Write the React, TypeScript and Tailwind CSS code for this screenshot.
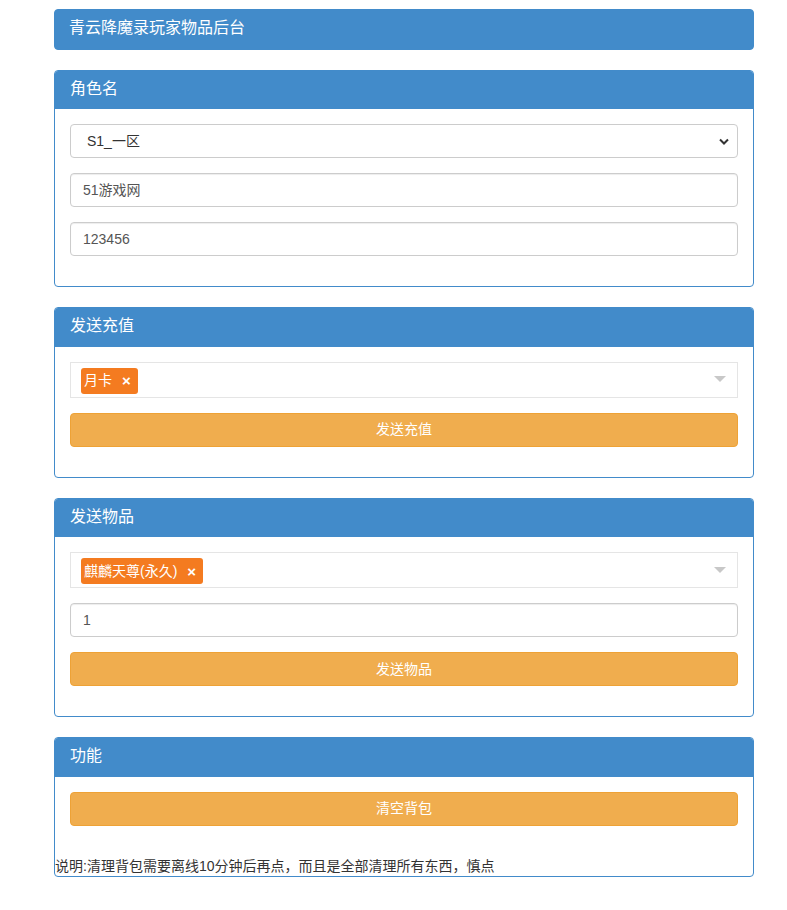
import React from "react";

const font = { fontFamily: '"Liberation Sans", "Noto Sans CJK SC", sans-serif' };

function Panel({ title, children, footer }: { title: string; children?: React.ReactNode; footer?: React.ReactNode }) {
  return (
    <div className="mb-[20px] rounded-[4px] border border-[#428bca] bg-white">
      <div className="h-[38.6px] rounded-t-[3px] border-b border-[#428bca] bg-[#428bca] px-[15px] pt-[9px] text-[16px] leading-[18px] text-white">
        {title}
      </div>
      {children !== undefined && <div className="flex flex-col gap-[15px] p-[15px] pb-[30px]">{children}</div>}
      {footer}
    </div>
  );
}

function TextBox({ value }: { value: string }) {
  return (
    <div className="flex h-[34px] items-center rounded-[4px] border border-[#ccc] px-[12px] text-[14px] text-[#555] shadow-[inset_0_1px_1px_rgba(0,0,0,0.075)]">
      {value}
    </div>
  );
}

function Multi({ tag }: { tag: string }) {
  return (
    <div className="flex h-[36px] items-center justify-between border border-[#e5e5e5] pl-[10px] pr-[10px] pt-[2px]">
      <div className="flex h-[26px] items-center gap-[10px] rounded-[3px] bg-[#f47b20] pl-[3px] pr-[7px] text-[14px] text-white">
        <span>{tag}</span>
        <span className="text-[15px] font-bold leading-none">×</span>
      </div>
      <svg width="12" height="7" viewBox="0 0 12 7" className="mr-[1px] -mt-[2px]">
        <path d="M0 0 L12 0 L6 6 Z" fill="#c8c8c8" />
      </svg>
    </div>
  );
}

function Btn({ label }: { label: string }) {
  return (
    <div className="flex h-[34px] items-center justify-center rounded-[4px] border border-[#eea236] bg-[#f0ad4e] text-[14px] text-white">
      {label}
    </div>
  );
}

export default function App() {
  return (
    <div className="min-h-[910px] bg-white text-[#333]" style={font}>
      <div className="w-[700px] pt-[9px]" style={{ marginLeft: 54 }}>
        <div className="mb-[20px] h-[40.6px] rounded-[4px] border border-[#428bca] bg-[#428bca] px-[14px] pt-[9px] text-[16px] leading-[18px] text-white">
          青云降魔录玩家物品后台
        </div>
        <Panel title="角色名">
          <div className="flex h-[34px] items-center justify-between rounded-[4px] border border-[#ccc] pl-[16px] pr-[8px] text-[14px] text-[#333]">
            <span>S1_一区</span>
            <svg width="10" height="7" viewBox="0 0 10 7">
              <path d="M1 1.5 L5 5.5 L9 1.5" stroke="#333" strokeWidth="2" fill="none" />
            </svg>
          </div>
          <TextBox value="51游戏网" />
          <TextBox value="123456" />
        </Panel>
        <Panel title="发送充值">
          <Multi tag="月卡" />
          <Btn label="发送充值" />
        </Panel>
        <Panel title="发送物品">
          <Multi tag="麒麟天尊(永久)" />
          <TextBox value="1" />
          <Btn label="发送物品" />
        </Panel>
        <Panel
          title="功能"
          footer={<div className="h-[20px] text-[14px] leading-[20px] text-[#333]">说明:清理背包需要离线10分钟后再点，而且是全部清理所有东西，慎点</div>}
        >
          <Btn label="清空背包" />
        </Panel>
      </div>
    </div>
  );
}
